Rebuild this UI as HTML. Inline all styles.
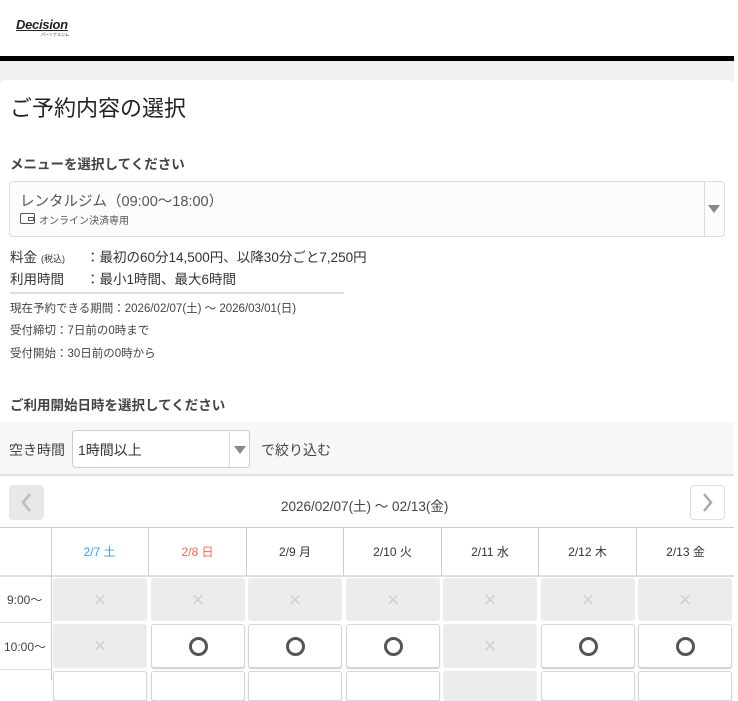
<!DOCTYPE html>
<html><head><meta charset="utf-8"><style>
*{margin:0;padding:0;box-sizing:border-box}
body{width:738px;height:680px;overflow:hidden;background:#fff;font-family:"Liberation Sans","Noto Sans CJK JP",sans-serif;color:#333;position:relative}
.a{position:absolute;white-space:nowrap}
.cell{position:absolute;border-radius:3px;display:flex;align-items:center;justify-content:center}
.x{background:#ececec;color:#d0d0d0;font-size:22px}
.o{background:#fff;border:1px solid #d6d6d6;box-shadow:0 1px 1px #ccc}
.o i{width:19px;height:19px;border:3px solid #555;border-radius:50%}
.hd{position:absolute;top:527px;height:49px;border-right:1px solid #ccc;display:flex;align-items:center;justify-content:center;font-size:12px;color:#333}
</style></head><body>
<div class="a" style="left:16px;top:17px;font-size:13px;font-weight:bold;font-style:italic;color:#222;text-decoration:underline;letter-spacing:-0.3px">Decision</div>
<div class="a" style="left:41px;top:32px;font-size:4px;color:#333">パーソナルジム</div>
<div class="a" style="left:0;top:56px;width:734px;height:5px;background:#000"></div>
<div class="a" style="left:0;top:61px;width:734px;height:361px;background:#f1f1f1"></div>
<div class="a" style="left:0;top:80px;width:734px;height:342px;background:#fff;border-radius:6px 6px 0 0"></div>
<div class="a" style="left:10px;top:91px;font-size:22px;color:#222">ご予約内容の選択</div>
<div class="a" style="left:10px;top:153px;font-size:13.5px;font-weight:bold;color:#444">メニューを選択してください</div>
<div class="a" style="left:9px;top:181px;width:716px;height:56px;border:1px solid #ddd;border-radius:4px;background:#fcfcfc"></div>
<div class="a" style="left:704px;top:182px;width:1px;height:54px;background:#ddd"></div>
<div class="a" style="left:708px;top:205px;width:0;height:0;border-left:6px solid transparent;border-right:6px solid transparent;border-top:8px solid #888"></div>
<div class="a" style="left:20px;top:190px;font-size:14.5px;color:#555">レンタルジム（09:00〜18:00）</div>
<div class="a" style="left:20px;top:213px;width:15px;height:11px;border:1.5px solid #555;border-radius:2px"></div>
<div class="a" style="left:28px;top:217px;width:6px;height:4px;border:1.5px solid #555"></div>
<div class="a" style="left:39px;top:212px;font-size:10px;color:#555">オンライン決済専用</div>
<div class="a" style="left:10px;top:246px;font-size:13.5px;color:#333">料金<span style="font-size:9px;margin-left:4px">(税込)</span></div>
<div class="a" style="left:86px;top:246px;font-size:13.5px;color:#333">：最初の60分14,500円、以降30分ごと7,250円</div>
<div class="a" style="left:10px;top:268px;font-size:13.5px;color:#333">利用時間</div>
<div class="a" style="left:86px;top:268px;font-size:13.5px;color:#333">：最小1時間、最大6時間</div>
<div class="a" style="left:10px;top:292px;width:334px;height:2px;background:#ddd"></div>
<div class="a" style="left:10px;top:300px;font-size:11.5px;color:#444">現在予約できる期間：2026/02/07(土) 〜 2026/03/01(日)</div>
<div class="a" style="left:10px;top:322px;font-size:11.5px;color:#444">受付締切：7日前の0時まで</div>
<div class="a" style="left:10px;top:345px;font-size:11.5px;color:#444">受付開始：30日前の0時から</div>
<div class="a" style="left:10px;top:394px;font-size:13.5px;font-weight:bold;color:#444">ご利用開始日時を選択してください</div>
<div class="a" style="left:0;top:422px;width:734px;height:54px;background:#f7f7f7;border-bottom:2px solid #e2e2e2"></div>
<div class="a" style="left:9px;top:440px;font-size:14px;color:#444">空き時間</div>
<div class="a" style="left:72px;top:430px;width:178px;height:38px;border:1px solid #ccc;border-radius:4px;background:#fff"></div>
<div class="a" style="left:229px;top:431px;width:1px;height:36px;background:#ddd"></div>
<div class="a" style="left:234px;top:446px;border-left:6px solid transparent;border-right:6px solid transparent;border-top:8px solid #888"></div>
<div class="a" style="left:78px;top:440px;font-size:14px;color:#333">1時間以上</div>
<div class="a" style="left:261px;top:440px;font-size:14px;color:#444">で絞り込む</div>
<div class="a" style="left:9px;top:485px;width:35px;height:35px;background:#e8e8e8;border-radius:4px"><svg width="35" height="35"><path d="M21 9 L14 17.5 L21 26" fill="none" stroke="#bbb" stroke-width="2.5"/></svg></div>
<div class="a" style="left:690px;top:485px;width:35px;height:35px;border:1px solid #ddd;border-radius:4px"><svg width="33" height="33"><path d="M13 8 L20 16.5 L13 25" fill="none" stroke="#aaa" stroke-width="2.5"/></svg></div>
<div class="a" style="left:281px;top:495px;font-size:13.5px;color:#444">2026/02/07(土) 〜 02/13(金)</div>
<div class="a" style="left:0;top:527px;width:734px;height:1px;background:#ccc"></div>
<div class="a" style="left:0;top:575px;width:734px;height:2px;background:#ddd"></div>
<div class="a" style="left:51px;top:527px;width:1px;height:153px;background:#ccc"></div>
<div class="a" style="left:0;top:622px;width:51px;height:1px;background:#ddd"></div>
<div class="a" style="left:0;top:669px;width:51px;height:1px;background:#ddd"></div>
<div class="hd" style="left:51px;width:98px;color:#2ea6e0">2/7 土</div>
<div class="hd" style="left:149px;width:98px;color:#f06a5a">2/8 日</div>
<div class="hd" style="left:247px;width:97px">2/9 月</div>
<div class="hd" style="left:344px;width:98px">2/10 火</div>
<div class="hd" style="left:442px;width:97px">2/11 水</div>
<div class="hd" style="left:539px;width:98px">2/12 木</div>
<div class="hd" style="left:637px;width:97px;border-right:none">2/13 金</div>
<div class="a" style="left:7px;top:591px;font-size:12px;color:#444">9:00〜</div>
<div class="a" style="left:4px;top:638px;font-size:12px;color:#444">10:00〜</div>
<div class="cell x" style="left:53px;top:578px;width:94px;height:43px">×</div>
<div class="cell x" style="left:151px;top:578px;width:94px;height:43px">×</div>
<div class="cell x" style="left:248px;top:578px;width:94px;height:43px">×</div>
<div class="cell x" style="left:346px;top:578px;width:94px;height:43px">×</div>
<div class="cell x" style="left:443px;top:578px;width:94px;height:43px">×</div>
<div class="cell x" style="left:541px;top:578px;width:94px;height:43px">×</div>
<div class="cell x" style="left:638px;top:578px;width:94px;height:43px">×</div>
<div class="cell x" style="left:53px;top:624px;width:94px;height:44px">×</div>
<div class="cell o" style="left:151px;top:624px;width:94px;height:44px"><i></i></div>
<div class="cell o" style="left:248px;top:624px;width:94px;height:44px"><i></i></div>
<div class="cell o" style="left:346px;top:624px;width:94px;height:44px"><i></i></div>
<div class="cell x" style="left:443px;top:624px;width:94px;height:44px">×</div>
<div class="cell o" style="left:541px;top:624px;width:94px;height:44px"><i></i></div>
<div class="cell o" style="left:638px;top:624px;width:94px;height:44px"><i></i></div>
<div class="cell o" style="left:53px;top:671px;width:94px;height:30px"></div>
<div class="cell o" style="left:151px;top:671px;width:94px;height:30px"></div>
<div class="cell o" style="left:248px;top:671px;width:94px;height:30px"></div>
<div class="cell o" style="left:346px;top:671px;width:94px;height:30px"></div>
<div class="cell x" style="left:443px;top:671px;width:94px;height:30px"></div>
<div class="cell o" style="left:541px;top:671px;width:94px;height:30px"></div>
<div class="cell o" style="left:638px;top:671px;width:94px;height:30px"></div>
</body></html>
